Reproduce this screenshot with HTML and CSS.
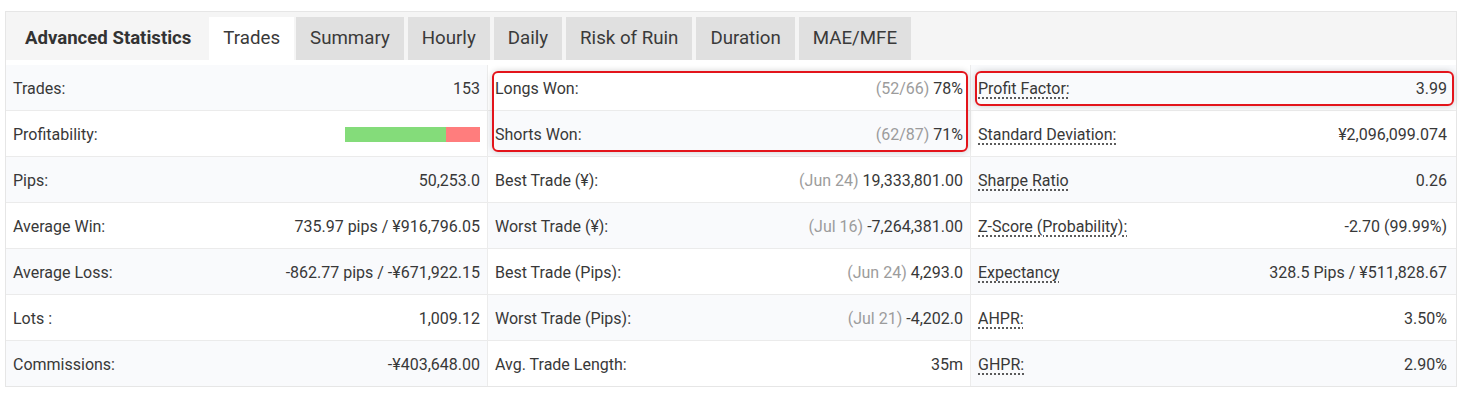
FILE: index.html
```html
<!DOCTYPE html>
<html lang="en">
<head>
  <meta charset="UTF-8" />
  <title>Advanced Statistics</title>
  <link rel="stylesheet" href="styles.css">
</head>
<body>
  <div class="panel">
    <!-- tab header -->
    <div class="tabs-bar">
      <div class="title">Advanced Statistics</div>
      <div class="tab active">Trades</div>
      <div class="tab">Summary</div>
      <div class="tab">Hourly</div>
      <div class="tab">Daily</div>
      <div class="tab">Risk of Ruin</div>
      <div class="tab">Duration</div>
      <div class="tab">MAE/MFE</div>
    </div>

    <div class="stats">
      <!-- column 1 -->
      <div class="col odd-first">
        <div class="row"><span class="label">Trades:</span><span class="value">153</span></div>
        <div class="row"><span class="label">Profitability:</span>
          <span class="value"><span class="bar"><span class="won" style="width:75%"></span><span class="lost"></span></span></span>
        </div>
        <div class="row"><span class="label">Pips:</span><span class="value">50,253.0</span></div>
        <div class="row"><span class="label">Average Win:</span><span class="value">735.97 pips / ¥916,796.05</span></div>
        <div class="row"><span class="label">Average Loss:</span><span class="value">-862.77 pips / -¥671,922.15</span></div>
        <div class="row"><span class="label">Lots :</span><span class="value">1,009.12</span></div>
        <div class="row"><span class="label">Commissions:</span><span class="value">-¥403,648.00</span></div>
      </div>

      <!-- column 2 -->
      <div class="col even-first">
        <div class="hl">
          <div class="row"><span class="label">Longs Won:</span><span class="value"><span class="muted">(52/66)</span> 78%</span></div>
          <div class="row"><span class="label">Shorts Won:</span><span class="value"><span class="muted">(62/87)</span> 71%</span></div>
        </div>
        <div class="row"><span class="label">Best Trade (¥):</span><span class="value"><span class="muted">(Jun 24)</span> 19,333,801.00</span></div>
        <div class="row"><span class="label">Worst Trade (¥):</span><span class="value"><span class="muted">(Jul 16)</span> -7,264,381.00</span></div>
        <div class="row"><span class="label">Best Trade (Pips):</span><span class="value"><span class="muted">(Jun 24)</span> 4,293.0</span></div>
        <div class="row"><span class="label">Worst Trade (Pips):</span><span class="value"><span class="muted">(Jul 21)</span> -4,202.0</span></div>
        <div class="row"><span class="label">Avg. Trade Length:</span><span class="value">35m</span></div>
      </div>

      <!-- column 3 -->
      <div class="col odd-first dotted">
        <div class="hl">
          <div class="row"><span class="label">Profit Factor:</span><span class="value">3.99</span></div>
        </div>
        <div class="row"><span class="label">Standard Deviation:</span><span class="value">¥2,096,099.074</span></div>
        <div class="row"><span class="label">Sharpe Ratio</span><span class="value">0.26</span></div>
        <div class="row"><span class="label">Z-Score (Probability):</span><span class="value">-2.70 (99.99%)</span></div>
        <div class="row"><span class="label">Expectancy</span><span class="value">328.5 Pips / ¥511,828.67</span></div>
        <div class="row"><span class="label">AHPR:</span><span class="value">3.50%</span></div>
        <div class="row"><span class="label">GHPR:</span><span class="value">2.90%</span></div>
      </div>
    </div>
  </div>
</body>
</html>
```

FILE: styles.css
```css
body {
  margin: 0;
  background: #fff;
  font-family: Roboto, "Liberation Sans", sans-serif;
  color: #383838;
}
.panel {
  margin: 11px 5px 0 5px;
  width: 1450px;
  border: 1px solid #e6e6e6;
}
/* header with tabs */
.tabs-bar {
  display: flex;
  align-items: flex-end;
  height: 48px;
  background: #f5f5f5;
  gap: 4px;
}
.title {
  height: 43px;
  line-height: 43px;
  padding: 0 14px 0 19px;
  font-size: 18.6px;
  font-weight: bold;
  color: #333;
}
.tab {
  height: 43px;
  line-height: 43px;
  padding: 0 14px;
  font-size: 18.7px;
  background: #e0e0e0;
  color: #3a3a3a;
}
.tab.active {
  background: #fff;
  margin-right: -2px;
}
/* statistics grid */
.stats {
  display: grid;
  grid-template-columns: 482px 483px 1fr;
  padding-top: 5px;
}
.col {
  border-right: 1px solid #ececec;
}
.col:last-child {
  border-right: none;
}
.row {
  display: flex;
  justify-content: space-between;
  align-items: center;
  box-sizing: border-box;
  height: 46px;
  padding: 2px 7px 0 7px;
  border-bottom: 1px solid #ebebeb;
  font-size: 16px;
}
.col:last-child .row {
  padding-right: 9px;
}
.col .row:last-child {
  border-bottom: none;
  height: 45px;
}
.odd-first > .row:nth-child(odd),
.odd-first > .hl .row,
.even-first > .row:nth-child(odd),
.even-first .hl .row:nth-child(even) {
  background: #f9fafc;
}
.value {
  text-align: right;
}
.muted {
  color: #9c9c9c;
}
.dotted .label {
  text-decoration: underline dotted #333;
  text-underline-offset: 4px;
}
/* profitability bar */
.bar {
  display: flex;
  width: 135px;
  height: 15px;
}
.bar .won {
  background: #84dc7a;
}
.bar .lost {
  flex: 1;
  background: #ff7d7d;
}
/* red highlight boxes */
.hl {
  position: relative;
}
.hl::after {
  content: "";
  position: absolute;
  top: 6px;
  bottom: 5px;
  left: 4px;
  right: 2px;
  border: 2px solid #e3141b;
  border-radius: 6px;
  box-shadow: 0 0 6px rgba(0, 0, 0, 0.18);
  pointer-events: none;
}
.hl .row:last-child {
  border-bottom: 1px solid #ebebeb;
  height: 46px;
}
```
